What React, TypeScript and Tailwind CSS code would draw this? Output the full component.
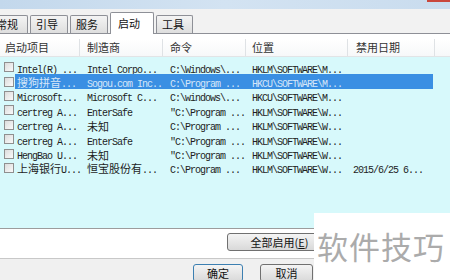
import React from "react";

const CJK = "font-['Noto_Sans_CJK_SC',sans-serif] text-[11px] tracking-normal leading-none";
const MONO = "font-['Liberation_Mono','Noto_Sans_CJK_SC',monospace] text-[10px] tracking-[-1px] leading-none";

function Txt({ t }: { t: string }) {
  const parts = t.split(/([\u4e00-\u9fff]+)/).filter((p) => p.length > 0);
  return (
    <span className="whitespace-pre leading-none">
      {parts.map((p, i) =>
        /[\u4e00-\u9fff]/.test(p) ? (
          <span key={i} className={CJK}>{p}</span>
        ) : (
          <span key={i} className={MONO}>{p}</span>
        )
      )}
    </span>
  );
}

const rows: string[][] = [
  ["Intel(R) ...", "Intel Corpo...", "C:\\Windows\\...", "HKLM\\SOFTWARE\\M...", ""],
  ["搜狗拼音...", "Sogou.com Inc...", "C:\\Program ...", "HKCU\\SOFTWARE\\M...", ""],
  ["Microsoft...", "Microsoft C...", "C:\\windows\\...", "HKCU\\SOFTWARE\\M...", ""],
  ["certreg A...", "EnterSafe", "\"C:\\Program ...", "HKLM\\SOFTWARE\\W...", ""],
  ["certreg A...", "未知", "C:\\Program ...", "HKLM\\SOFTWARE\\W...", ""],
  ["certreg A...", "EnterSafe", "\"C:\\Program ...", "HKLM\\SOFTWARE\\W...", ""],
  ["HengBao U...", "未知", "\"C:\\Program ...", "HKLM\\SOFTWARE\\W...", ""],
  ["上海银行U...", "恒宝股份有...", "C:\\Program ...", "HKLM\\SOFTWARE\\W...", "2015/6/25 6..."],
];

function Tab({ label, w, selected }: { label: string; w: string; selected?: boolean }) {
  if (selected) {
    return (
      <div className={`${w} h-[22px] -mb-px bg-white border border-b-0 border-[#8e9097] rounded-t-[2px] flex items-center pl-[7px] relative z-10`}>
        <span className={CJK + " text-[#111]"}>{label}</span>
      </div>
    );
  }
  return (
    <div className={`${w} h-[18px] bg-gradient-to-b from-[#f4f4f4] to-[#dedede] border border-b-0 border-[#8e9097] rounded-t-[2px] flex items-center pl-[5px]`}>
      <span className={CJK + " text-[#111]"}>{label}</span>
    </div>
  );
}

function Check() {
  return (
    <div className="w-[10px] h-[10px] border border-[#8f8f8f] bg-gradient-to-br from-[#dcdcdc] to-[#fafafa]" />
  );
}

function Btn({ label, w, focus }: { label: React.ReactNode; w: string; focus?: boolean }) {
  return (
    <div
      className={`${w} h-[18px] rounded-[3px] border ${focus ? "border-[#3c7fb1]" : "border-[#707070]"} bg-gradient-to-b from-[#f4f4f4] to-[#d9d9d9] flex items-center justify-center`}
    >
      <span className={CJK + " text-[#111]"}>{label}</span>
    </div>
  );
}

export default function App() {
  return (
    <div className="w-[450px] h-[280px] overflow-hidden relative bg-[#f0f0f0] text-[#1a1a1a]">
      {/* title bar */}
      <div className="h-[9px] bg-gradient-to-r from-[#c3d8ec] via-[#d3e3f2] to-[#c9dcee] flex justify-end">
        <div className="w-[23px] h-[2px] bg-[#c9473c]" />
      </div>
      {/* tab strip */}
      <div className="h-[24px] bg-[#f2f2f2] flex items-end gap-[2px] pl-0 relative">
        <div className="-ml-[10px]">
          <Tab label="常规" w="w-[38px]" />
        </div>
        <Tab label="引导" w="w-[38px]" />
        <Tab label="服务" w="w-[38px]" />
        <Tab label="启动" w="w-[44px]" selected />
        <Tab label="工具" w="w-[37px]" />
      </div>
      {/* panel */}
      <div className="h-[225px] bg-white border-t border-[#8e9097] flex flex-col">
        <div className="h-[5px]" />
        {/* list */}
        <div className="h-[190px] bg-[#d7f9fb] border-b border-[#9c9c9c] flex flex-col">
          <div className="h-[18px] bg-gradient-to-b from-white to-[#f7f8f9] border-b border-[#e2e4e6] flex text-[#333]">
            <div className="w-[80px] pl-[5px] border-r border-[#dfe2e5] flex items-center"><span className={CJK}>启动项目</span></div>
            <div className="w-[83px] pl-[7px] border-r border-[#dfe2e5] flex items-center"><span className={CJK}>制造商</span></div>
            <div className="w-[83px] pl-[7px] border-r border-[#dfe2e5] flex items-center"><span className={CJK}>命令</span></div>
            <div className="w-[102px] pl-[6px] border-r border-[#dfe2e5] flex items-center"><span className={CJK}>位置</span></div>
            <div className="w-[87px] pl-[8px] border-r border-[#dfe2e5] flex items-center"><span className={CJK}>禁用日期</span></div>
            <div className="flex-1" />
          </div>
          <div className="h-[3px]" />
          {rows.map((r, i) => {
            const sel = i === 1;
            return (
              <div key={i} className="h-[14.4px] flex items-center">
                <div className="w-[15px] pl-[4px] flex items-center">
                  <Check />
                </div>
                <div className={`w-[418px] h-full flex items-center ${sel ? "bg-[#3a8fe3] text-[#d6e6f8]" : "text-[#1e1e1e]"}`}>
                  <div className="w-[65px] pl-[2px] whitespace-nowrap flex items-center"><Txt t={r[0]} /></div>
                  <div className="w-[83px] pl-[7px] overflow-hidden whitespace-nowrap flex items-center"><Txt t={r[1]} /></div>
                  <div className="w-[83px] pl-[7px] overflow-hidden whitespace-nowrap flex items-center"><Txt t={r[2]} /></div>
                  <div className="w-[102px] pl-[6px] overflow-hidden whitespace-nowrap flex items-center"><Txt t={r[3]} /></div>
                  <div className="w-[85px] pl-[5px] overflow-hidden whitespace-nowrap flex items-center"><Txt t={r[4]} /></div>
                </div>
              </div>
            );
          })}
        </div>
        {/* enable all */}
        <div className="flex-1 flex items-start pt-[4px] pl-[227px]">
          <Btn
            w="w-[105px]"
            label={
              <>
                全部启用(<span className="underline">E</span>)
              </>
            }
          />
        </div>
      </div>
      {/* bottom buttons */}
      <div className="h-[22px] border-t border-[#c8c8c8] flex items-start pt-[5px] pl-[193px] gap-[17px]">
        <Btn w="w-[50px]" label="确定" focus />
        <Btn w="w-[53px]" label="取消" />
      </div>
      {/* watermark */}
      <div className="absolute left-[314px] top-[213px] w-[136px] h-[67px] bg-white flex items-center pl-[3px] pb-[3px]">
        <span className="font-['Noto_Sans_CJK_SC',sans-serif] text-[31px] leading-none text-[#ababab] tracking-[1px]">软件技巧</span>
      </div>
    </div>
  );
}
